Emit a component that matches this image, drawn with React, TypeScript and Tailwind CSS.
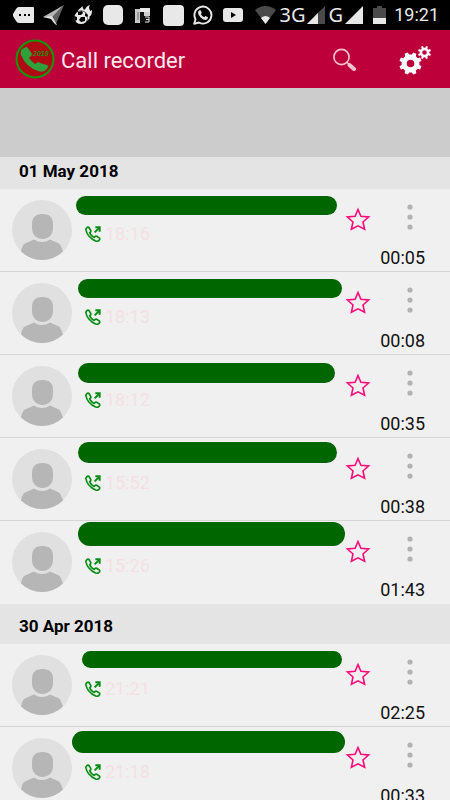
interface Call {
  id: number;
  time: string;
  duration: string;
  // margins and height of the bar that hides the contact
  mask: string;
}

interface CallGroup {
  date: string;
  headerClass: string;
  calls: Call[];
}

const groups: CallGroup[] = [
  {
    date: "01 May 2018",
    headerClass: "h-8 pb-1",
    calls: [
      { id: 1, time: "18:16", duration: "00:05", mask: "ml-1 mr-2 mt-[7px] h-[19px]" },
      { id: 2, time: "18:13", duration: "00:08", mask: "ml-[6px] mr-[3px] mt-[7px] h-[19px]" },
      { id: 3, time: "18:12", duration: "00:35", mask: "ml-[6px] mr-[10px] mt-2 h-5" },
      { id: 4, time: "15:52", duration: "00:38", mask: "ml-[6px] mr-2 mt-1 h-[21px]" },
      { id: 5, time: "15:26", duration: "01:43", mask: "ml-[6px] mt-px h-6" },
    ],
  },
  {
    date: "30 Apr 2018",
    headerClass: "h-10 pt-1",
    calls: [
      { id: 6, time: "21:21", duration: "02:25", mask: "ml-[10px] mr-[3px] mt-[7px] h-[17px]" },
      { id: 7, time: "21:18", duration: "00:33", mask: "mt-1 h-[22px]" },
    ],
  },
];

function gearPath(cx: number, cy: number, outer: number, inner: number, teeth: number) {
  const points: string[] = [];
  const step = (Math.PI * 2) / teeth;
  for (let i = 0; i < teeth; i++) {
    const a = i * step + step / 2;
    const corners = [
      [inner, -0.3],
      [outer, -0.2],
      [outer, 0.2],
      [inner, 0.3],
    ];
    for (const [r, offset] of corners) {
      const angle = a + offset * step;
      points.push(`${(cx + r * Math.cos(angle)).toFixed(2)} ${(cy + r * Math.sin(angle)).toFixed(2)}`);
    }
  }
  return `M${points.join("L")}Z`;
}

function holePath(cx: number, cy: number, r: number) {
  return `M${cx - r} ${cy}a${r} ${r} 0 1 0 ${r * 2} 0a${r} ${r} 0 1 0 ${-r * 2} 0Z`;
}

function SignalIcon({ partial = false }: { partial?: boolean }) {
  return (
    <svg className="h-[18px] w-[18px]" viewBox="0 0 18 18" aria-hidden="true">
      <path d="M0 18L18 0V18Z" fill={partial ? "#4a4a4a" : "#e8e8e8"} />
      {partial && <path d="M0 18L11 7V18Z" fill="#e8e8e8" />}
    </svg>
  );
}

function StatusBar() {
  return (
    <div className="flex h-[30px] shrink-0 items-center justify-between bg-black pl-2 pr-[11px] text-[#e8e8e8]">
      <div className="flex items-center">
        {/* Message */}
        <span className="flex w-[30px] justify-center">
          <svg className="h-4 w-[21px]" viewBox="0 0 21 16" aria-hidden="true">
            <path d="M6 0H20Q21 0 21 1V15Q21 16 20 16H6Q4 16 3 14L0 9Q0 8 0 7L3 2Q4 0 6 0Z" fill="#e8e8e8" />
            <path d="M6 7h2v2h-2zM11 7h2v2h-2zM15 7h2v2h-2z" fill="#000" />
          </svg>
        </span>
        {/* Arrow */}
        <span className="flex w-[30px] justify-center">
          <svg className="h-5 w-[21px]" viewBox="0 0 21 20" aria-hidden="true">
            <path d="M21 0L0 12L9 13Z" fill="#b4b4b4" />
            <path d="M21 0L9 12L13 19Z" fill="#606060" />
            <path d="M0 12L9 11L14 20Q12 20 8 14Z" fill="#dedede" />
          </svg>
        </span>
        {/* Football */}
        <span className="flex w-[30px] justify-center">
          <svg className="h-5 w-5" viewBox="0 0 20 20" aria-hidden="true">
            <path
              d="M5 7C5 3 8 4 9 1C10 2 10 4 11 5C13 4 13 1 17 0C15 3 17 4 17 6L19 5C19 9 18 11 16 12L17 13L13 17Z"
              fill="#e8e8e8"
            />
            <circle cx="8" cy="12.5" r="7" fill="#000" />
            <circle cx="8" cy="12.5" r="6.6" fill="#e8e8e8" />
            <path d="M5 7L9 6L10 8L8 10L5 10ZM1 11L4 12L4 15L2 16ZM8 12L12 12L12 16L8 17L6 15ZM12 8L15 10L14 12L12 11Z" fill="#000" />
          </svg>
        </span>
        <span className="flex w-[30px] justify-center">
          <span className="size-5 rounded-[5px] bg-[#e8e8e8]" />
        </span>
        {/* Score board */}
        <span className="flex w-[30px] justify-center">
          <svg className="h-[15px] w-4" viewBox="0 0 16 15" aria-hidden="true">
            <path d="M0 1H5V15H0Z" fill="#c8c8c8" />
            <path d="M2 4H4V12H2Z" fill="#9a9a9a" />
            <path d="M5 0H15V4H5Z" fill="#e8e8e8" />
            <path d="M5 4H9V14H5Z" fill="#111" />
            <path d="M9 4H15V8H9Z" fill="#d0d0d0" />
            <path d="M9 8H15V15H9Z" fill="#111" />
            <path d="M10 9H14V14H10M11 11.5H14" fill="none" stroke="#e8e8e8" />
          </svg>
        </span>
        <span className="flex w-[30px] justify-center">
          <span className="size-[21px] rounded-[4px] bg-[#e8e8e8]" />
        </span>
        {/* WhatsApp */}
        <span className="flex w-[30px] justify-center">
          <svg className="h-5 w-5" viewBox="0 0 20 20" aria-hidden="true">
            <path
              d="M1.200 18.800L2.500 14.200A8.500 8.500 0 1 1 5.800 17.500Z"
              fill="none"
              stroke="#e8e8e8"
              strokeWidth="1.900"
              strokeLinejoin="round"
            />
            <path
              d="M6.500 5.200H7.600L8.800 8L7.800 9.300Q9 11.400 11.200 12.300L12.400 11L15 12.300Q15 14.800 12.600 15Q10.500 15 7.600 12.400Q5 9.700 5 7.500Q5.100 6 6.500 5.200Z"
              fill="#e8e8e8"
            />
          </svg>
        </span>
        {/* YouTube */}
        <span className="flex w-[30px] justify-center">
          <svg className="h-[14px] w-5" viewBox="0 0 20 14" aria-hidden="true">
            <rect width="20" height="14" rx="3" fill="#e8e8e8" />
            <path d="M8 4L13 7L8 10Z" fill="#000" />
          </svg>
        </span>
      </div>

      <div className="flex items-center">
        <svg className="h-[18px] w-[21px]" viewBox="0 0 21 18" aria-hidden="true">
          <path d="M0 4Q10.500 -4 21 4L10.500 18Z" fill="#4a4a4a" />
          <path d="M6 12Q10.500 8 15 12L10.500 18Z" fill="#e8e8e8" />
        </svg>
        <span className="ml-1 font-['Noto_Sans',sans-serif] text-[20px] leading-none">3G</span>
        <span className="ml-px">
          <SignalIcon partial />
        </span>
        <span className="ml-1 font-['Noto_Sans',sans-serif] text-[20px] leading-none">G</span>
        <span className="ml-[2px]">
          <SignalIcon />
        </span>
        <svg className="ml-[10px] h-[18px] w-[13px]" viewBox="0 0 13 18" aria-hidden="true">
          <path d="M4 0H9V2H13V12H0V2H4Z" fill="#4a4a4a" />
          <path d="M0 12H13V18H0Z" fill="#e8e8e8" />
        </svg>
        <span className="ml-2 text-lg leading-none">19:21</span>
      </div>
    </div>
  );
}

function AppLogo() {
  return (
    <svg className="size-10" viewBox="0 0 40 40" aria-hidden="true">
      <circle cx="20" cy="20" r="18.500" fill="#b00a12" stroke="#109a0a" strokeWidth="2" />
      <path
        d="M7 10L11 8Q12 8 13 9L17 15Q17 16 16 17L14 19Q16 22 20 25L23 23Q24 23 25 24L32 26Q34 27 33 28L31 31Q28 34 23 32Q11 28 6 16Q5 12 7 10Z"
        fill="#2fa03a"
      />
      <text
        x="18"
        y="17"
        fill="#1f8a10"
        className="font-['Liberation_Sans',sans-serif] text-[7px] font-bold italic"
      >
        2018
      </text>
    </svg>
  );
}

function Header() {
  return (
    <header className="flex h-[58px] shrink-0 items-center bg-[#bd0039] pl-[15px] pr-4 text-white">
      <AppLogo />
      <h1 className="ml-[6px] flex-1 pt-1 text-[22px] leading-7 text-[#fbe9ee]">Call recorder</h1>
      <button type="button" aria-label="Search" className="mr-[42px]">
        <svg className="size-6" viewBox="0 0 24 24" aria-hidden="true">
          <circle cx="9.500" cy="10" r="7.600" fill="none" stroke="#f3c3d0" strokeWidth="1.600" />
          <path d="M14.500 15L17 17" stroke="#f3c3d0" strokeWidth="1.600" />
          <path d="M17.500 18L22 22" stroke="#f3c3d0" strokeWidth="4" strokeLinecap="round" />
        </svg>
      </button>
      <button type="button" aria-label="Settings" className="pt-[2px]">
        <svg className="h-[30px] w-9" viewBox="0 0 36 30" fill="#fff" fillRule="evenodd" aria-hidden="true">
          <path d={gearPath(12.5, 18.5, 11.3, 9, 8) + holePath(12.5, 18.5, 3.8)} />
          <path d={gearPath(26.5, 7.5, 6.6, 4.8, 8) + holePath(26.5, 7.5, 2.3)} />
        </svg>
      </button>
    </header>
  );
}

function Avatar() {
  return (
    <svg className="ml-3 mt-[11px] size-[60px] shrink-0" viewBox="0 0 60 60" aria-hidden="true">
      <clipPath id="avatar-clip">
        <circle cx="30" cy="30" r="30" />
      </clipPath>
      <circle cx="30" cy="30" r="30" fill="#e0e0e0" />
      <path
        d="M30.500 14C38 14 41 18 41 24V28C41 35 36 39 30.500 39S20 35 20 28V24C20 18 23 14 30.500 14Z"
        fill="#b6b6b6"
      />
      <path
        clipPath="url(#avatar-clip)"
        d="M22 39.500Q30 44.500 38 39.500L47 43.500Q49 45 51 52V60H9V52Q10 45 13 43.500Z"
        fill="#b6b6b6"
      />
    </svg>
  );
}

function OutgoingIcon() {
  return (
    <svg
      className="size-4"
      viewBox="0 0 48 48"
      fill="none"
      stroke="#078c14"
      strokeWidth="5"
      strokeLinejoin="round"
      aria-hidden="true"
    >
      <path d="M4 7Q9 0 13 6L17 13Q19 17 14 20Q16 25 20 29Q24 33 28 34Q31 29 35 31L42 35Q47 39 42 43Q38 47 32 45Q20 40 11 29Q4 20 3 12Q2 9 4 7Z" />
      <path d="M29 19L42 6" strokeWidth="6" />
      <path d="M31 4H44V17" strokeWidth="6" strokeLinejoin="miter" />
    </svg>
  );
}

function CallRow({ call }: { call: Call }) {
  return (
    <li className="flex h-[83px] border-b border-[#d6d6d6] bg-[#f0f0f0] last:border-b-0">
      <Avatar />
      <div className="flex-1">
        <div className="h-9 overflow-hidden">
          <div className={`rounded-full bg-[#006600] ${call.mask}`} />
        </div>
        <div className="ml-[13px] flex items-center gap-1">
          <OutgoingIcon />
          <span className="text-lg leading-[18px] text-[#f4e1e5]">{call.time}</span>
        </div>
      </div>
      <button type="button" aria-label="Add to favourites" className="mt-[17px] h-[26px] w-[26px] shrink-0">
        <svg className="size-[26px]" viewBox="0 0 26 26" aria-hidden="true">
          <path
            d="M13 3.500L15.900 10.300L23.600 11L18 16L19.600 23.200L13 19.800L6.400 23.200L8 16L2.400 11L10.100 10.300Z"
            fill="none"
            stroke="#ff0a78"
            strokeWidth="1.600"
          />
        </svg>
      </button>
      <div className="flex w-[79px] shrink-0 flex-col">
        <button type="button" aria-label="More options" className="mt-[14px] flex justify-center">
          <svg className="h-7 w-[7px]" viewBox="0 0 7 28" fill="#b2b2b2" aria-hidden="true">
            <circle cx="3" cy="4" r="2.600" />
            <circle cx="3" cy="14" r="2.600" />
            <circle cx="3" cy="24" r="2.600" />
          </svg>
        </button>
        <span className="mt-[17px] pr-[25px] text-right text-lg leading-5 text-[#111]">{call.duration}</span>
      </div>
    </li>
  );
}

export default function App() {
  return (
    <div className="flex h-screen flex-col overflow-hidden bg-[#f0f0f0] font-[Roboto,sans-serif]">
      <StatusBar />
      <Header />
      {/* Ad slot */}
      <div className="h-[69px] shrink-0 bg-[#cccccc]" />
      <main className="min-h-0 flex-1 overflow-y-auto [scrollbar-width:none]">
        {groups.map((group) => (
          <section key={group.date}>
            <h2
              className={`flex items-center bg-[#e4e4e4] pl-[19px] text-[17px] font-bold leading-5 text-black ${group.headerClass}`}
            >
              {group.date}
            </h2>
            <ul>
              {group.calls.map((call) => (
                <CallRow key={call.id} call={call} />
              ))}
            </ul>
          </section>
        ))}
      </main>
    </div>
  );
}
